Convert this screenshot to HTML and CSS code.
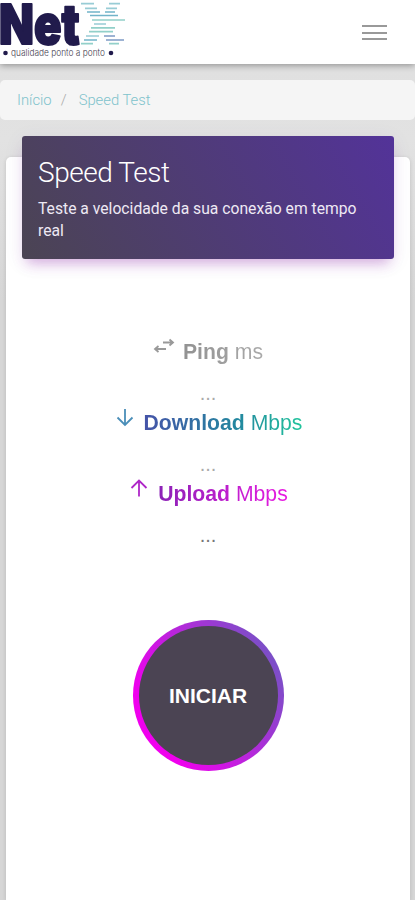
FILE: index.html
```html
<!DOCTYPE html>
<html lang="pt-BR">
<head>
<meta charset="utf-8">
<meta name="viewport" content="width=device-width, initial-scale=1">
<title>Speed Test</title>
<link rel="stylesheet" href="styles.css">
</head>
<body>
<header class="navbar">
  <svg class="logo" width="132" height="62" viewBox="0 0 132 62" role="img" aria-label="NetX">
    <text class="logo-name" x="-1" y="43.500" textLength="80.500" lengthAdjust="spacingAndGlyphs">Net</text>
    <g fill="none" stroke-width="1.7">
      <path stroke="#98ccd5" d="M81 3.700h13M109 3.700h11M85 8.300h12M106 8.300h11M94 24h12M86 36h13"/>
      <path stroke="#72b4c9" d="M87 12h13M105 12h10M90 15.500h28M84 40h13"/>
      <path stroke="#92d0c9" d="M92 20h33M91 27.800h24M89 31.700h24M81 43.700h12M109 43.700h10"/>
      <path stroke="#7d9bc5" d="M104 36h11M106 40h18"/>
    </g>
    <circle cx="5.500" cy="53" r="2.300"/>
    <text class="logo-tagline" x="11" y="55.500" textLength="94" lengthAdjust="spacingAndGlyphs">qualidade ponto a ponto</text>
    <circle cx="111" cy="53" r="2.300"/>
  </svg>
  <button class="menu" aria-label="Menu"><span></span><span></span><span></span></button>
</header>
<nav class="breadcrumb"><a>Início</a><span>/</span><a>Speed Test</a></nav>
<main class="card">
  <div class="card-header">
    <h1>Speed Test</h1>
    <p>Teste a velocidade da sua conexão em tempo real</p>
  </div>
  <section class="results">
    <div class="metric ping">
      <svg width="22" height="22" viewBox="0 0 22 22"><path d="M10 5.500h10M16.500 2.500l3.500 3-3.500 3M13 12H2M5.500 9 2 12l3.500 3"/></svg>
      <h2><b>Ping</b> ms</h2>
    </div>
    <div class="value">...</div>
    <div class="metric download">
      <svg width="22" height="22" viewBox="0 0 22 22"><path d="M11 1v16M3.500 9.500 11 17l7.500-7.500"/></svg>
      <h2><b>Download</b> Mbps</h2>
    </div>
    <div class="value">...</div>
    <div class="metric upload">
      <svg width="22" height="22" viewBox="0 0 22 22"><path d="M11 17.500V1.500M3.500 9 11 1.500l7.500 7.500"/></svg>
      <h2><b>Upload</b> Mbps</h2>
    </div>
    <div class="value last">...</div>
  </section>
  <button class="start">INICIAR</button>
</main>
</body>
</html>
```
FILE: styles.css
```css
* { box-sizing: border-box; }
body {
  margin: 0;
  height: 900px;
  overflow: hidden;
  display: flex;
  flex-direction: column;
  background: linear-gradient(#dedede, #e2e2e2 140px, #d6d6d6 300px);
  font-family: Roboto, sans-serif;
}
h1, h2, p { margin: 0; font-weight: 300; }
button { border: 0; padding: 0; background: none; }
.navbar {
  height: 64px;
  flex: none;
  display: flex;
  justify-content: space-between;
  align-items: flex-start;
  background: #fff;
  box-shadow: 0 1px 7px rgba(0, 0, 0, .4);
}
.logo { display: block; fill: #211b4c; }
.logo-name { font: 900 55px Inter, sans-serif; stroke: #211b4c; stroke-width: 2; stroke-linejoin: round; }
.logo-tagline { font: 300 9.500px Inter, sans-serif; fill: #45404f; }
.menu {
  width: 25px;
  margin: 25px 28px 0 0;
  display: flex;
  flex-direction: column;
  gap: 4.500px;
}
.menu span { height: 2px; background: #999; }
.breadcrumb {
  flex: none;
  height: 40px;
  margin-top: 16px;
  padding-left: 17px;
  display: flex;
  align-items: center;
  border-radius: 5px;
  background: #f5f5f5;
  color: #80c3cc;
  font-size: 14.800px;
  font-weight: 300;
}
.breadcrumb span { width: 27px; padding-left: 9px; color: #aaa; }
.card {
  flex: 1;
  margin: 37px 5px 0 6px;
  padding: 0 16px;
  display: flex;
  flex-direction: column;
  align-items: center;
  border-radius: 5px 5px 0 0;
  background: #fff;
  box-shadow: 0 1px 4px rgba(0, 0, 0, .14);
}
.card-header {
  align-self: stretch;
  height: 123px;
  margin-top: -21px;
  padding: 20px 16px;
  border-radius: 3px;
  background: linear-gradient(60deg, #4b4453, #533399);
  box-shadow: 0 4px 20px rgba(83, 51, 153, .08), 0 9px 12px -5px rgba(156, 39, 176, .35);
  color: #fff;
}
.card-header h1 { font-size: 28px; line-height: 34px; letter-spacing: -.45px; }
.card-header p { margin-top: 8px; font-size: 15.700px; line-height: 22px; font-weight: 400; color: #eee9f4; }
.results {
  width: 100%;
  padding-top: 75px;
  font-family: "Liberation Sans", sans-serif;
}
.metric { height: 36px; display: flex; justify-content: center; gap: 8px; }
.metric svg { flex: none; margin-top: 3px; fill: none; stroke: currentColor; stroke-width: 1.800; }
.metric h2 { font-size: 21.200px; line-height: 36px; background-clip: text; color: transparent; }
.metric b { font-weight: 700; }
.ping { color: #999; }
.ping h2 { background-image: linear-gradient(90deg, #929292, #aaa); }
.download { color: #4a8eb8; }
.download h2 { background-image: linear-gradient(90deg, #4553a8, #23889f 60%, #20c49c); }
.upload { color: #af27c8; }
.upload h2 { background-image: linear-gradient(90deg, #8b22b6, #e91be2); }
.value { height: 35px; padding-top: 13px; text-align: center; font-size: 20px; line-height: 20px; color: #aaa; }
.value.last { color: #777; }
.start {
  width: 151px;
  height: 151px;
  margin: 73px 0 0 0;
  border: 6px solid transparent;
  border-radius: 50%;
  background: linear-gradient(#4b4453, #4b4453) padding-box, linear-gradient(60deg, #f000ee 20%, #7553c5 90%) border-box;
  color: #fff;
  font: 700 21px "Liberation Sans", sans-serif;
}
```
